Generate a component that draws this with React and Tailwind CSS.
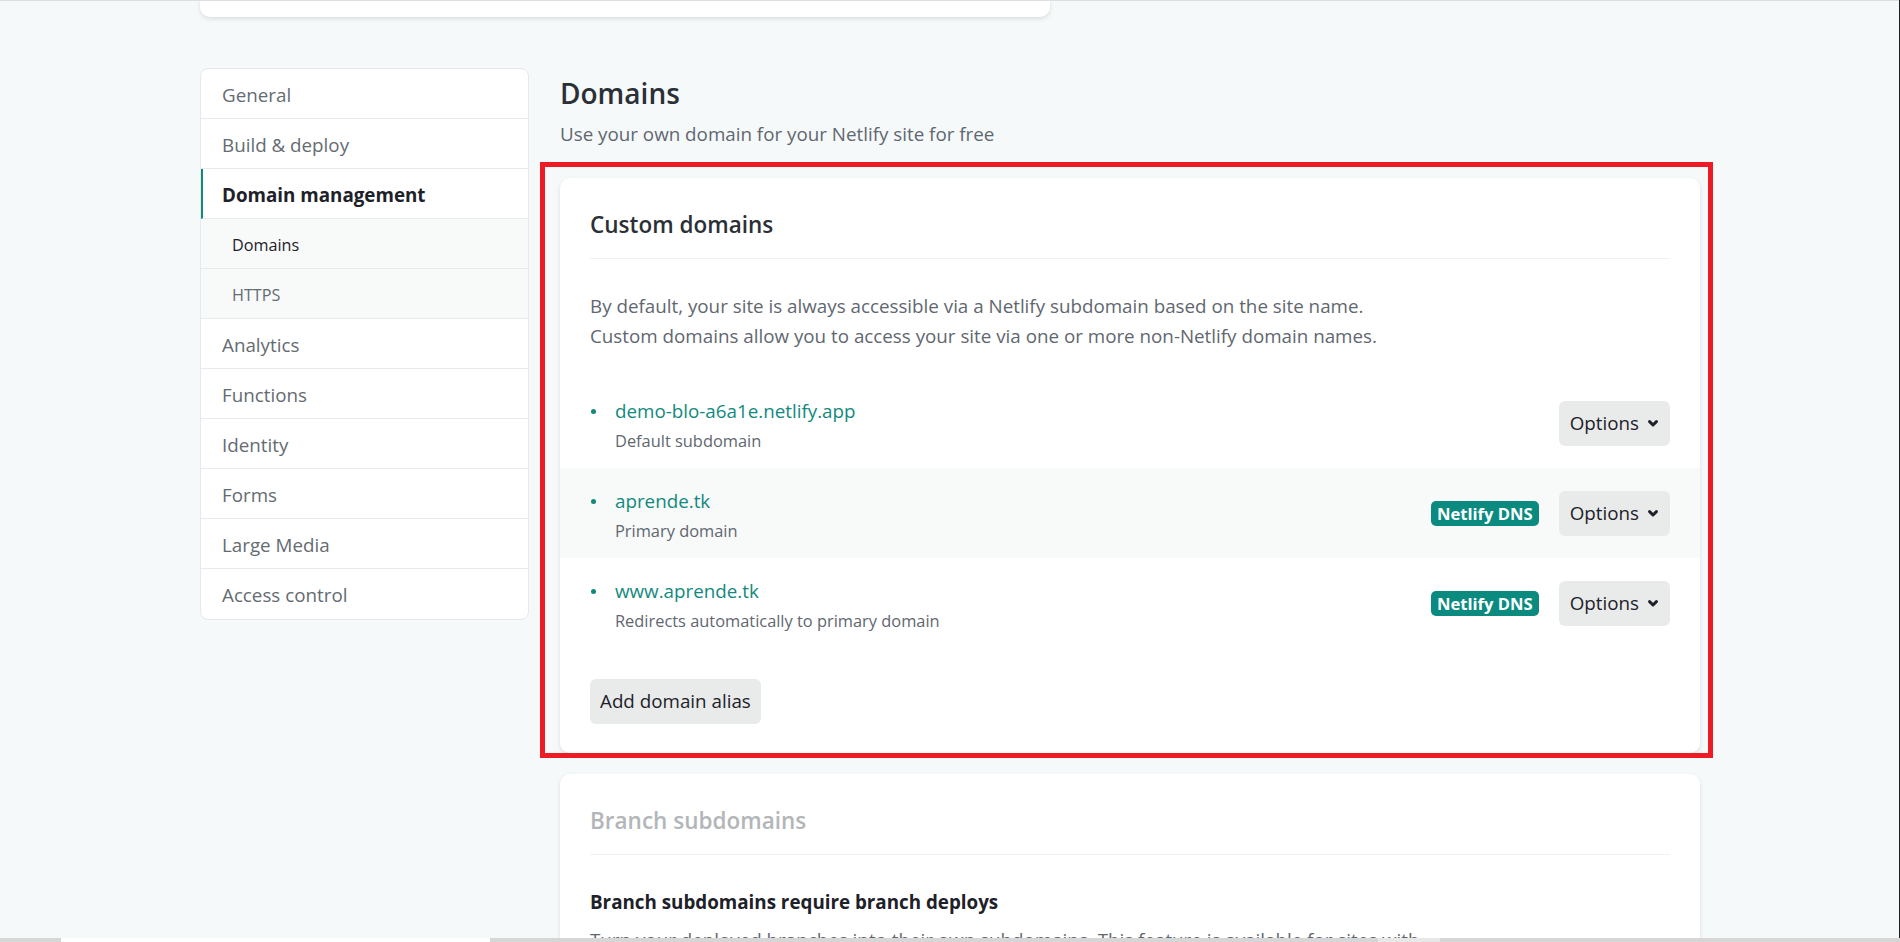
import { useState } from "react";

const menu = [
  { label: "General" },
  { label: "Build & deploy" },
  { label: "Domain management", active: true },
  { label: "Domains", sub: true, current: true },
  { label: "HTTPS", sub: true },
  { label: "Analytics" },
  { label: "Functions" },
  { label: "Identity" },
  { label: "Forms" },
  { label: "Large Media" },
  { label: "Access control" },
];

const domains = [
  { name: "demo-blo-a6a1e.netlify.app", note: "Default subdomain", dns: false },
  { name: "aprende.tk", note: "Primary domain", dns: true, shaded: true },
  { name: "www.aprende.tk", note: "Redirects automatically to primary domain", dns: true },
];

function Chevron() {
  return (
    <svg width="10" height="7" viewBox="0 0 10 7" className="shrink-0">
      <path d="M1.6 1.6 L5 5 L8.4 1.6" fill="none" stroke="#1d2128" strokeWidth="3" strokeLinecap="round" strokeLinejoin="round" />
    </svg>
  );
}

function SideItem({ item }) {
  // three looks: top level, the open section, its children
  let cls = "block h-[50px] border-b border-[#e9ebeb] last:border-b-0 pl-[21px] pt-[13px] text-[18.8px] leading-[26px] text-[#646b72]";
  if (item.active) {
    cls = "block h-[50px] border-b border-[#e9ebeb] border-l-2 border-l-[#11897d] pl-[19px] pt-[13px] text-[18.8px] leading-[26px] font-bold text-[#1d2128]";
  }
  if (item.sub) {
    cls = item.current
      ? "block h-[50px] border-b border-[#e9ebeb] bg-[#f8f9f9] pl-[31px] pt-[14px] text-[16.2px] leading-[24px] text-[#1d2128]"
      : "block h-[50px] border-b border-[#e9ebeb] bg-[#f8f9f9] pl-[31px] pt-[14px] text-[16.2px] leading-[24px] text-[#646b72]";
  }
  return <a href="#" className={cls}>{item.label}</a>;
}

function DomainRow({ d }) {
  return (
    <li className={`flex h-[90px] px-[30px] ${d.shaded ? "bg-[#f8f9f9]" : "bg-white"}`}>
      <div className="flex pt-[20px]">
        <span className="mt-[11px] ml-[1px] w-[5px] h-[5px] rounded-full bg-[#11897d]" />
        <div className="ml-[19px]">
          <a href="#" className="block text-[18.8px] leading-[26px] text-[#11897d]">{d.name}</a>
          <div className="mt-[5px] text-[16.4px] leading-[24px] text-[#5f6770]">{d.note}</div>
        </div>
      </div>
      <div className="ml-auto self-center flex items-center gap-[20px]">
        {d.dns && (
          <span className="h-[25px] px-[6px] rounded-[5px] bg-[#0b8b7f] text-white font-bold text-[16.6px] leading-[25px]">
            Netlify DNS
          </span>
        )}
        <button className="h-[45px] pl-[11px] pr-[12px] flex items-center gap-[9px] rounded-[6px] bg-[#e9ebeb] text-[18.8px] text-[#1d2128]">
          Options
          <Chevron />
        </button>
      </div>
    </li>
  );
}

export default function App() {
  const [open] = useState(true);

  return (
    <div className="h-screen overflow-hidden bg-[#f6f9fa] font-['Open_Sans',sans-serif]">
      <div className="w-[1500px] mx-auto">
        <div className="w-[850px] h-[17px] bg-white rounded-b-[10px] shadow-[0_2px_4px_rgba(14,30,37,0.12)]" />

        <div className="flex mt-[51px]">
          <nav className="w-[329px] shrink-0 self-start bg-white border border-[#e6e9eb] rounded-[8px] overflow-hidden">
            {menu.map((item, index) => (
              <SideItem key={index} item={item} />
            ))}
          </nav>

          <main className="ml-[31px] w-[1140px]">
            <h1 className="mt-[8px] text-[28px] leading-[35px] font-semibold text-[#2b3036]">Domains</h1>
            <p className="mt-[10px] text-[18.8px] leading-[26px] text-[#5f6770]">
              Use your own domain for your Netlify site for free
            </p>

            <div className="relative mt-[31px]">
              <section className="bg-white rounded-[10px] shadow-[0_2px_4px_rgba(14,30,37,0.12)] px-[30px] pt-[31px] pb-[29px]">
                <h2 className="pb-[17px] border-b border-[#eef0f1] text-[22.5px] leading-[32px] font-semibold text-[#2b3036]">
                  Custom domains
                </h2>
                <div className="mt-[32px] text-[18.8px] leading-[30px] text-[#5f6770]">
                  <p>By default, your site is always accessible via a Netlify subdomain based on the site name.</p>
                  <p>Custom domains allow you to access your site via one or more non-Netlify domain names.</p>
                </div>
                <ul className="mt-[27px] -mx-[30px]">
                  {open && domains.map((d, index) => <DomainRow key={index} d={d} />)}
                </ul>
                <button className="mt-[31px] h-[45px] px-[10px] rounded-[6px] bg-[#e9ebeb] text-[18.8px] text-[#1d2128]">
                  Add domain alias
                </button>
              </section>
              {/* red highlight drawn over the card */}
              <div className="pointer-events-none absolute -left-[20px] -right-[13px] -top-[16px] -bottom-[5px] border-[5px] border-[#ed1c24]" />
            </div>

            <section className="mt-[21px] bg-white rounded-[10px] shadow-[0_2px_4px_rgba(14,30,37,0.12)] px-[30px] pt-[31px] pb-[30px]">
              <h2 className="pb-[17px] border-b border-[#eef0f1] text-[22.5px] leading-[32px] font-semibold text-[#b3b6b8]">
                Branch subdomains
              </h2>
              <h3 className="mt-[32px] text-[18.8px] leading-[30px] font-bold text-[#1d2128]">
                Branch subdomains require branch deploys
              </h3>
              <p className="mt-[8px] max-w-[850px] text-[18.8px] leading-[30px] text-[#5f6770]">
                Turn your deployed branches into their own subdomains. This feature is available for sites with continuous deployment from a Git repository.
              </p>
            </section>
          </main>
        </div>
      </div>

      <div className="fixed top-0 left-0 right-0 h-px bg-[#dcdfe2]" />
      <div className="fixed top-0 bottom-0 right-0 w-px bg-[#1f1f1f]" />
      <div className="fixed bottom-0 left-0 right-0 h-[4px] flex bg-[#d6d6d6]">
        <div className="ml-[61px] w-[429px] bg-white" />
        <div className="ml-[888px] w-[62px] bg-[#e8e8e8]" />
      </div>
    </div>
  );
}
